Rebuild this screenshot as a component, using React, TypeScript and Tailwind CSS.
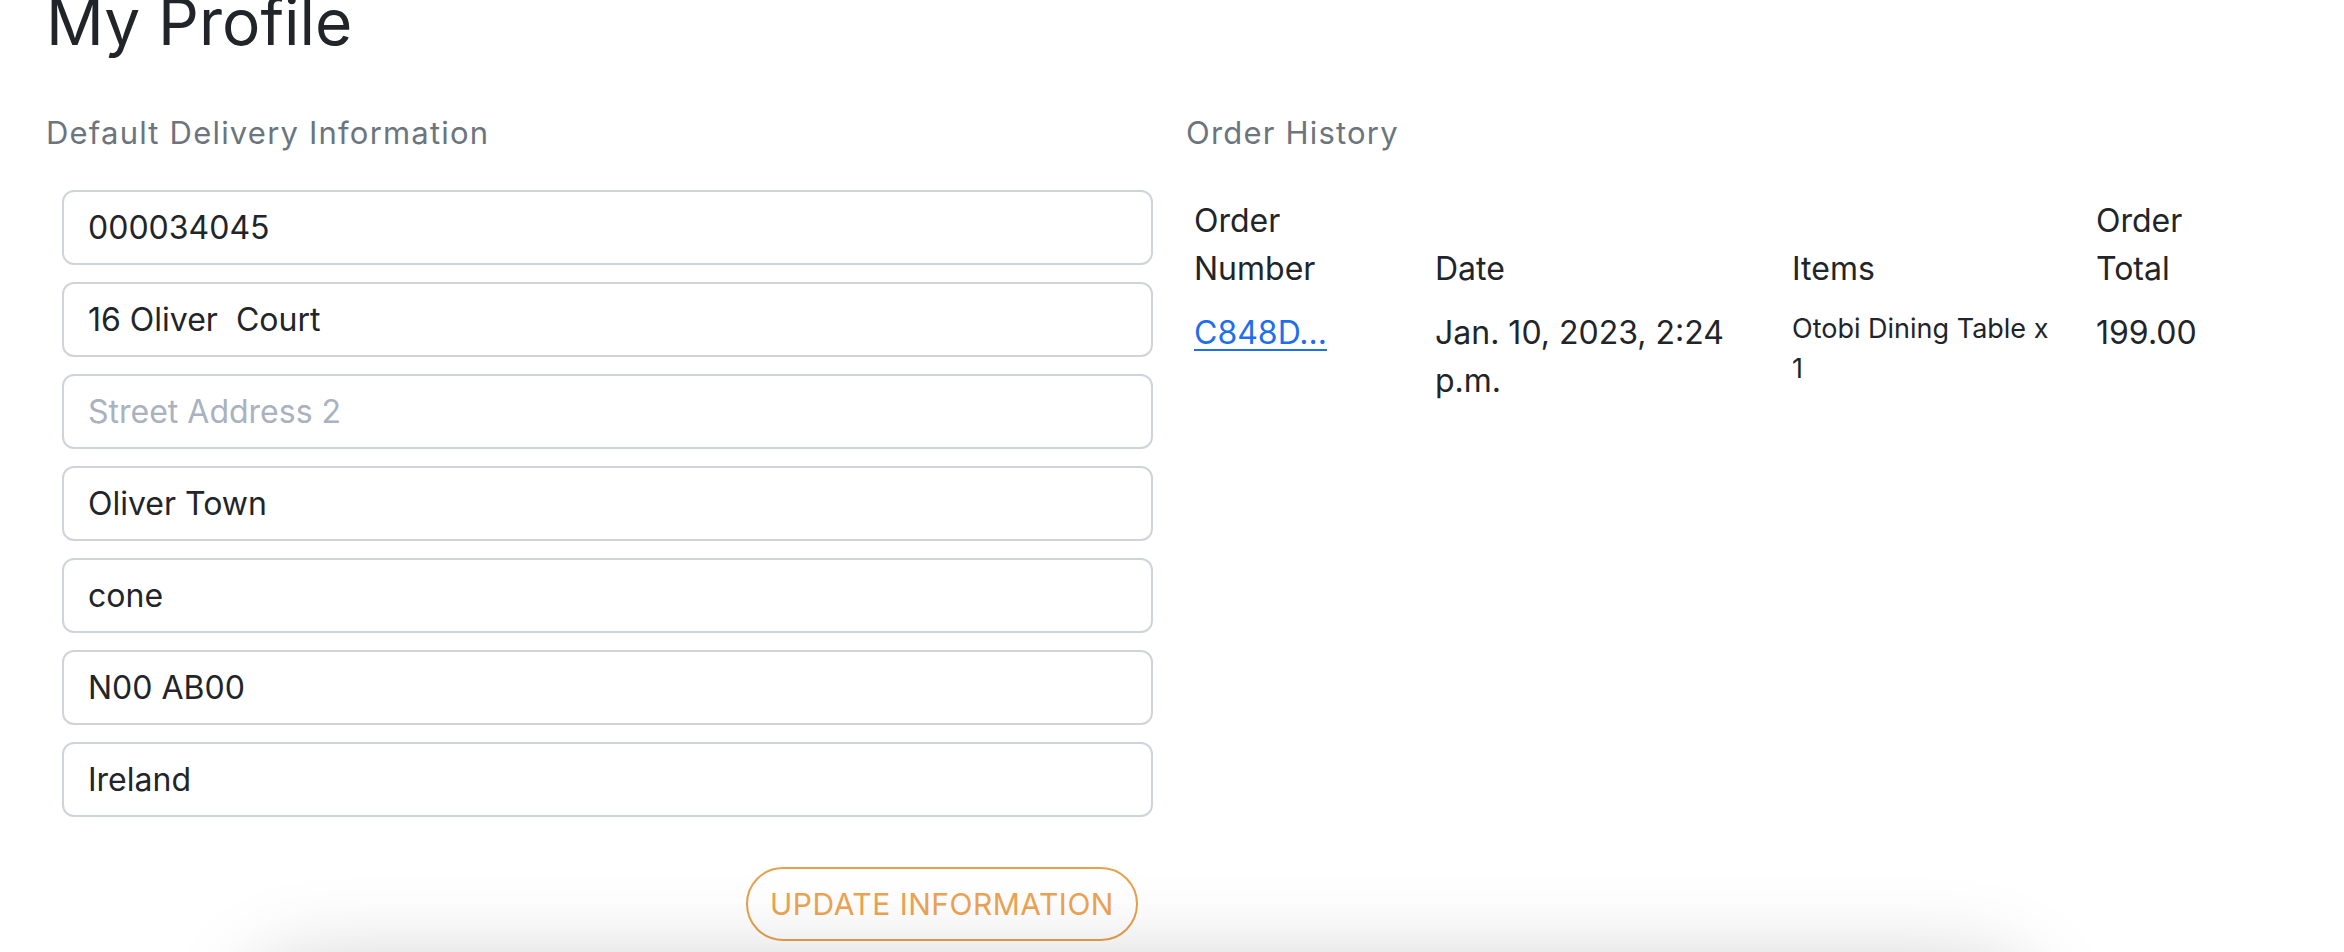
import React from "react";

const font = { fontFamily: "Inter, 'Open Sans', sans-serif" };

const fields: { value?: string; placeholder?: string }[] = [
  { value: "000034045" },
  { value: "16 Oliver  Court" },
  { placeholder: "Street Address 2" },
  { value: "Oliver Town" },
  { value: "cone" },
  { value: "N00 AB00" },
  { value: "Ireland" },
];

export default function App() {
  return (
    <div className="relative min-h-[952px] overflow-hidden bg-white text-[#212529]" style={font}>
      <div className="flex pl-[46px]">
        {/* Left column */}
        <div className="w-[1140px] shrink-0">
          <h2 className="mt-[-17px] text-[64px] leading-[77px] font-normal text-[#212529]">My Profile</h2>
          <div className="mt-[52px] text-[31px] leading-[42px] tracking-[1.2px] text-[#6c757d]">Default Delivery Information</div>
          <div className="ml-[16px] mt-[36px] flex w-[1091px] flex-col gap-[17px]">
            {fields.map((f, i) => (
              <input
                key={i}
                readOnly
                defaultValue={f.value}
                placeholder={f.placeholder}
                className="h-[75px] w-full rounded-[12px] border-2 border-[#ced4da] bg-white px-[24px] text-[32px] text-[#212529] placeholder:text-[#a9b2be] outline-none"
                style={{ whiteSpace: "pre" }}
              />
            ))}
          </div>
          <div className="ml-[16px] mt-[50px] flex w-[1091px] justify-end pr-[15px]">
            <button className="h-[74px] w-[392px] rounded-full border-2 border-[#e8a04c] bg-white text-[30px] tracking-[0.5px] text-[#eca453]">
              UPDATE INFORMATION
            </button>
          </div>
        </div>

        {/* Right column */}
        <div className="flex-1">
          <div className="mt-[112px] text-[31px] leading-[42px] tracking-[1.2px] text-[#6c757d]">Order History</div>
          <table className="mt-[35px] border-collapse text-[32px] leading-[48px] text-[#212529]">
            <thead>
              <tr>
                <th className="w-[241px] px-[8px] py-[8px] text-left align-bottom font-normal">
                  <span className="block">Order</span>
                  <span className="block">Number</span>
                </th>
                <th className="w-[357px] px-[8px] py-[8px] text-left align-bottom font-normal">Date</th>
                <th className="w-[304px] px-[8px] py-[8px] text-left align-bottom font-normal">Items</th>
                <th className="w-[160px] px-[8px] py-[8px] text-left align-bottom font-normal">
                  <span className="block">Order</span>
                  <span className="block">Total</span>
                </th>
              </tr>
            </thead>
            <tbody>
              <tr>
                <td className="px-[8px] py-[8px] align-top">
                  <a href="#" className="text-[#1f6ef0] underline decoration-2 underline-offset-[5px]">C848D...</a>
                </td>
                <td className="px-[8px] py-[8px] align-top">
                  <span className="block">Jan. 10, 2023, 2:24</span>
                  <span className="block">p.m.</span>
                </td>
                <td className="px-[8px] py-[8px] align-top text-[27px] leading-[40px]">
                  <span className="block">Otobi Dining Table x</span>
                  <span className="block">1</span>
                </td>
                <td className="px-[8px] py-[8px] align-top">199.00</td>
              </tr>
            </tbody>
          </table>
        </div>
      </div>

      {/* footer shadow peeking from below */}
      <div className="absolute left-[250px] top-[968px] h-[200px] w-[1780px] rounded-[60px] bg-white shadow-[0_0_90px_rgba(0,0,0,0.22)]" />
    </div>
  );
}
